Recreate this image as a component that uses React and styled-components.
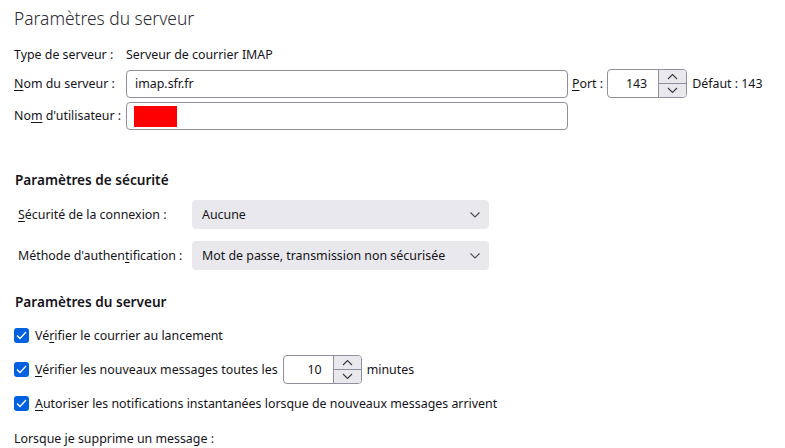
import React from "react";
import styled, { createGlobalStyle } from "styled-components";

const Global = createGlobalStyle`
  html, body { margin: 0; padding: 0; background: #ffffff; }
  body { font-family: "Noto Sans", "Open Sans", sans-serif; font-size: 12.4px; color: #15141a; }
`;

const Page = styled.div`
  width: 785px;
  height: 448px;
  overflow: hidden;
  padding-left: 14px;
  box-sizing: border-box;
  display: flex;
  flex-direction: column;
`;

const Title = styled.h1`
  margin: 0 0 9px 0;
  font-size: 17.4px;
  font-weight: 300;
  line-height: 36px;
  height: 36px;
  color: #2b2a33;
`;

const Grid = styled.div`
  display: grid;
  grid-template-columns: 112px 442px auto auto auto;
  grid-auto-rows: auto;
  row-gap: 4px;
  align-items: center;
`;

const Label = styled.span`
  line-height: 20px;
  white-space: nowrap;
  padding-left: ${(p) => p.$indent || 0}px;
`;

const Key = styled.span`
  text-decoration: underline;
  text-underline-offset: 2px;
`;

const Field = styled.div`
  height: 28px;
  box-sizing: border-box;
  border: 1px solid #8f8f9d;
  border-radius: 4px;
  display: flex;
  align-items: center;
  padding-left: 8px;
  background: #fff;
`;

const Redact = styled.span`
  width: 43px;
  height: 21px;
  background: #ff0000;
  margin-left: -1px;
`;

const PortGroup = styled.div`
  display: flex;
  align-items: center;
`;

const PortLabel = styled.span`
  margin-left: 4px;
  margin-right: 4px;
  white-space: nowrap;
`;

const Spinner = styled.div`
  width: ${(p) => p.$w}px;
  height: 29px;
  box-sizing: border-box;
  border: 1px solid #8f8f9d;
  border-radius: 4px;
  display: flex;
  overflow: hidden;
  background: #fff;
`;

const SpinValue = styled.div`
  flex: 1;
  display: flex;
  align-items: center;
  justify-content: flex-end;
  padding-right: 11px;
`;

const SpinButtons = styled.div`
  width: 27px;
  display: flex;
  flex-direction: column;
  border-left: 1px solid #8f8f9d;
`;

const SpinBtn = styled.div`
  flex: 1;
  background: #e9e9ed;
  display: flex;
  align-items: center;
  justify-content: center;
  & + & { border-top: 1px solid #8f8f9d; }
`;

const Default = styled.span`
  margin-left: 5px;
  white-space: nowrap;
`;

const Section = styled.h2`
  margin: ${(p) => p.$top}px 0 0 1px;
  font-size: 13.6px;
  font-weight: 600;
  line-height: 20px;
  color: #15141a;
`;

const SelectGrid = styled.div`
  margin-top: 10px;
  display: grid;
  grid-template-columns: 178px 297px;
  row-gap: 12px;
  align-items: center;
`;

const Select = styled.div`
  height: 29px;
  border-radius: 4px;
  background: #e9e9ed;
  display: flex;
  align-items: center;
  justify-content: space-between;
  padding: 0 9px 0 10px;
  box-sizing: border-box;
`;

const CheckList = styled.div`
  margin-top: 9px;
  display: flex;
  flex-direction: column;
  gap: 6px;
`;

const CheckRow = styled.div`
  height: 28px;
  display: flex;
  align-items: center;
  gap: 6px;
  white-space: nowrap;
`;

const Box = styled.span`
  width: 15px;
  height: 15px;
  border-radius: 3px;
  background: #0061e0;
  display: inline-flex;
  align-items: center;
  justify-content: center;
  flex: none;
`;

const Inline = styled.span`
  display: inline-flex;
  align-items: center;
  gap: 5px;
`;

const Footer = styled.div`
  margin-top: 12px;
  line-height: 20px;
`;

const Chevron = ({ up }) => (
  <svg width="11" height="7" viewBox="0 0 11 7">
    <path
      d={up ? "M1 6 L5.5 1.5 L10 6" : "M1 1 L5.5 5.5 L10 1"}
      fill="none"
      stroke="#3a3a3a"
      strokeWidth="1.1"
    />
  </svg>
);

const SelectChevron = () => (
  <svg width="10" height="6" viewBox="0 0 10 6">
    <path d="M0.5 0.5 L5 5 L9.5 0.5" fill="none" stroke="#4a4a4a" strokeWidth="1.1" />
  </svg>
);

const Check = () => (
  <svg width="11" height="9" viewBox="0 0 11 9">
    <path d="M1 4.5 L4 7.5 L10 1" fill="none" stroke="#fff" strokeWidth="1.3" />
  </svg>
);

const NumSpin = ({ value, w }) => (
  <Spinner $w={w}>
    <SpinValue>{value}</SpinValue>
    <SpinButtons>
      <SpinBtn><Chevron up /></SpinBtn>
      <SpinBtn><Chevron /></SpinBtn>
    </SpinButtons>
  </Spinner>
);

export default function App() {
  return (
    <>
      <Global />
      <Page>
        <Title>Paramètres du serveur</Title>
        <Grid>
          <Label>Type de serveur :</Label>
          <Label style={{ gridColumn: "2 / 6" }}>Serveur de courrier IMAP</Label>

          <Label><Key>N</Key>om du serveur :</Label>
          <Field>imap.sfr.fr</Field>
          <PortGroup>
            <PortLabel><Key>P</Key>ort :</PortLabel>
            <NumSpin value="143" w={80} />
            <Default>Défaut : 143</Default>
          </PortGroup>
          <span />
          <span />

          <Label>No<Key>m</Key> d'utilisateur :</Label>
          <Field><Redact /></Field>
        </Grid>

        <Section $top={40}>Paramètres de sécurité</Section>
        <SelectGrid>
          <Label $indent={4}><Key>S</Key>écurité de la connexion :</Label>
          <Select>Aucune<SelectChevron /></Select>
          <Label $indent={4}>Méthode d'authen<Key>t</Key>ification :</Label>
          <Select>Mot de passe, transmission non sécurisée<SelectChevron /></Select>
        </SelectGrid>

        <Section $top={22}>Paramètres du serveur</Section>
        <CheckList>
          <CheckRow>
            <Box><Check /></Box>
            <span>Vé<Key>r</Key>ifier le courrier au lancement</span>
          </CheckRow>
          <CheckRow>
            <Box><Check /></Box>
            <Inline>
              <span><Key>V</Key>érifier les nouveaux messages toutes les</span>
              <NumSpin value="10" w={79} />
              <span>minutes</span>
            </Inline>
          </CheckRow>
          <CheckRow>
            <Box><Check /></Box>
            <span><Key>A</Key>utoriser les notifications instantanées lorsque de nouveaux messages arrivent</span>
          </CheckRow>
        </CheckList>
        <Footer>Lorsque je supprime un message :</Footer>
      </Page>
    </>
  );
}
